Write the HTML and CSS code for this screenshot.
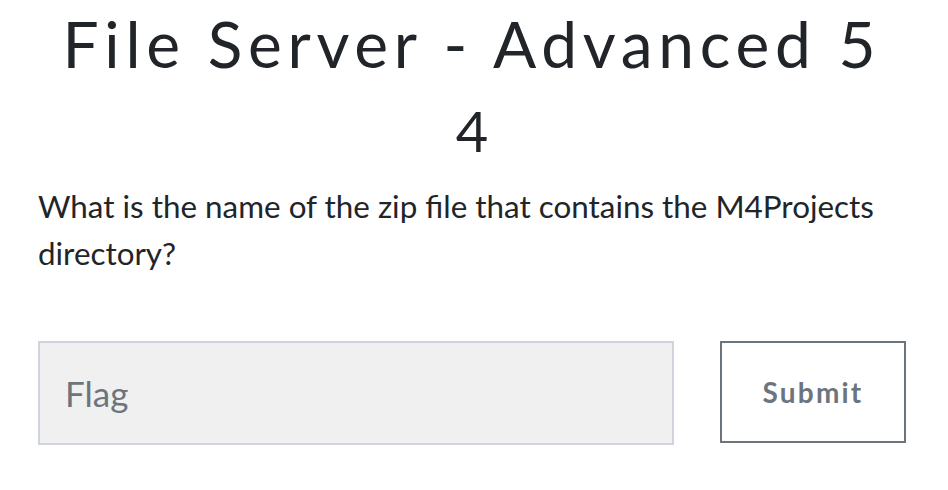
FILE: index.html
```html
<!DOCTYPE html>
<html>
<head>
<meta charset="utf-8">
<link rel="stylesheet" href="styles.css">
</head>
<body>
<div class="card">
  <h2 class="title">File Server - Advanced 5 <span class="num">4</span></h2>
  <p class="question">What is the name of the zip file that contains the M4Projects directory?</p>
  <form class="answer">
    <input class="flag" type="text" placeholder="Flag">
    <button class="submit" type="button">Submit</button>
  </form>
</div>
</body>
</html>
```
FILE: styles.css
```css
html, body {
  margin: 0;
  padding: 0;
  background: #ffffff;
}
.card {
  padding: 0 42px 0 38px;
  color: #212529;
}
.title {
  margin: 0;
  padding-top: 1px;
  text-align: center;
  font-family: Lato, "Liberation Sans", sans-serif;
  font-weight: 400;
  font-size: 64px;
  letter-spacing: 5.7px;
  line-height: 85px;
}
.num {
  display: block;
  margin-top: 2px;
  font-family: Lato, sans-serif;
  font-weight: 400;
  font-size: 56px;
  letter-spacing: 0;
  line-height: 85px;
}
.question {
  margin: 10px 0 0 0;
  font-family: Lato, "Liberation Sans", sans-serif;
  font-size: 31.4px;
  line-height: 47px;
}
.answer {
  display: flex;
  gap: 46px;
  margin-top: 64px;
}
.flag {
  flex: 1;
  box-sizing: border-box;
  height: 104px;
  margin: 0;
  padding: 0 25px;
  background: #f0f0f0;
  border: 2px solid #d0d5dd;
  border-radius: 0;
  font-family: Lato, sans-serif;
  font-size: 35px;
  color: #495057;
  outline: none;
}
.flag::placeholder {
  color: #6c757d;
  opacity: 1;
}
.submit {
  box-sizing: border-box;
  width: 186px;
  height: 102px;
  margin: 0;
  background: #ffffff;
  border: 2px solid #6c757d;
  border-radius: 0;
  font-family: Lato, sans-serif;
  font-weight: 700;
  font-size: 28px;
  letter-spacing: 2.2px;
  color: #6c757d;
}
```
